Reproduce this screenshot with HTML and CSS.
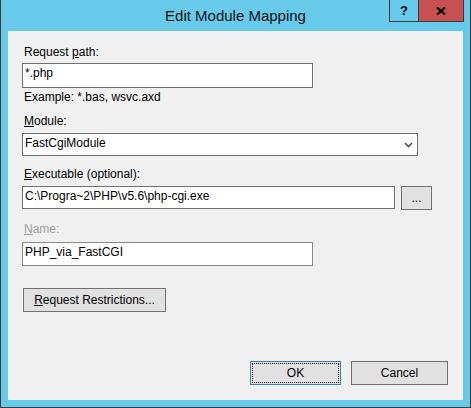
FILE: index.html
```html
<!DOCTYPE html>
<html>
<head>
<meta charset="utf-8">
<link rel="stylesheet" href="styles.css">
</head>
<body>
<div class="window">
  <div class="titlebar">
    <div class="title">Edit Module Mapping</div>
    <div class="caption-buttons">
      <div class="cap help">?</div>
      <div class="cap close">
        <svg width="10" height="8" viewBox="0 0 10 8"><path d="M1 0.5 L9 7.5 M9 0.5 L1 7.5" stroke="#000" stroke-width="2.2" fill="none"/></svg>
      </div>
    </div>
  </div>
  <div class="client">
    <div class="label label-first">Request <u>p</u>ath:</div>
    <div class="textbox short">*.php</div>
    <div class="label hint">Example: *.bas, wsvc.axd</div>
    <div class="label label-module"><u>M</u>odule:</div>
    <div class="textbox combo">
      <span>FastCgiModule</span>
      <svg class="chevron" width="9" height="6" viewBox="0 0 9 6"><polyline points="1,1 4.5,4.5 8,1" stroke="#505050" stroke-width="1.6" fill="none"/></svg>
    </div>
    <div class="label label-exec"><u>E</u>xecutable (optional):</div>
    <div class="exec-row">
      <div class="textbox exec">C:\Progra~2\PHP\v5.6\php-cgi.exe</div>
      <div class="button browse">...</div>
    </div>
    <div class="label label-name disabled"><u>N</u>ame:</div>
    <div class="textbox short name">PHP_via_FastCGI</div>
    <div class="button restrictions"><u>R</u>equest Restrictions...</div>
    <div class="actions">
      <div class="button ok">OK</div>
      <div class="button cancel">Cancel</div>
    </div>
  </div>
</div>
</body>
</html>
```
FILE: styles.css
```css
* { box-sizing: border-box; }
html, body { margin: 0; padding: 0; background: #ffffff; }
.window {
  width: 471px;
  height: 408px;
  background: #68caea;
  border: 1px solid #3c3c3c;
  border-top: none;
  display: flex;
  flex-direction: column;
  font-family: "Liberation Sans", Arial, sans-serif;
}
.titlebar {
  position: relative;
  height: 31px;
  flex: none;
}
.title {
  text-align: center;
  font-size: 15px;
  line-height: 31px;
  color: #111;
}
.caption-buttons {
  position: absolute;
  top: 0;
  right: 6px;
  display: flex;
}
.cap {
  height: 22px;
  border: 1px solid #3a3a3a;
  border-top: none;
  display: flex;
  align-items: center;
  justify-content: center;
}
.help {
  width: 29px;
  border-right: none;
  font-weight: bold;
  font-size: 13px;
  color: #000;
}
.close {
  width: 46px;
  background: #c75050;
}
.client {
  margin: 0 7px 7px 7px;
  height: 369px;
  background: #f0f0f0;
  padding: 0 15px 0 14px;
  display: flex;
  flex-direction: column;
  align-items: flex-start;
  font-size: 12px;
  line-height: 15px;
  color: #000;
}
.label { margin-left: 2px; }
.label-first { margin-top: 14px; }
.hint { margin-top: 2px; }
.label-module { margin-top: 9px; }
.label-exec { margin-top: 11px; }
.label-name { margin-top: 12px; }
.disabled { color: #a0a0a0; }
.textbox {
  background: #ffffff;
  border: 1px solid #707070;
  padding: 2px 0 0 2px;
  height: 23px;
  white-space: nowrap;
}
.short { width: 291px; height: 25px; margin-top: 3px; }
.name { height: 24px; margin-top: 5px; border-color: #8a8a8a; }
.combo {
  width: 396px;
  margin-top: 4px;
  display: flex;
  justify-content: space-between;
  align-items: flex-start;
}
.chevron { align-self: center; margin-right: 4px; margin-top: -2px; }
.exec-row {
  margin-top: 4px;
  display: flex;
  gap: 6px;
  align-items: flex-start;
}
.exec { width: 373px; }
.button {
  height: 24px;
  background: #e1e1e1;
  border: 1px solid #707070;
  display: flex;
  align-items: center;
  justify-content: center;
  white-space: nowrap;
}
.browse { width: 31px; }
.restrictions { width: 143px; margin-top: 22px; margin-left: 1px; }
.actions {
  align-self: stretch;
  margin-top: 49px;
  display: flex;
  justify-content: flex-end;
  gap: 10px;
}
.ok {
  width: 91px;
  border-color: #3c7fb1;
  outline: 1px dotted #000;
  outline-offset: -3px;
}
.cancel { width: 97px; }
```
